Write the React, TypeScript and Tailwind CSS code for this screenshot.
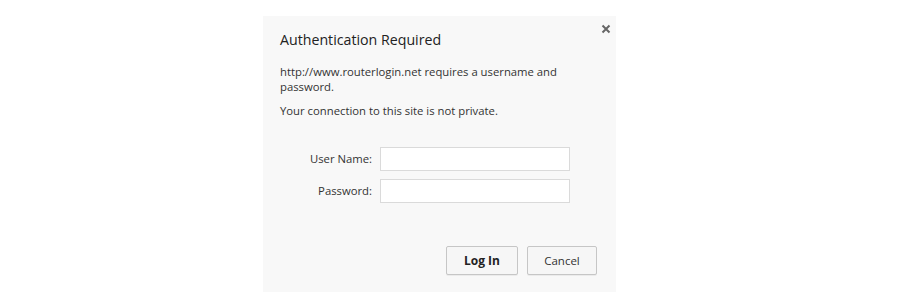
import React from 'react';

const App: React.FC = () => {
  return (
    <div className="w-[900px] h-[307px] bg-white flex justify-center pt-4 font-['Open_Sans',sans-serif] text-[#333]">
      <div className="w-[353px] h-[276px] bg-[#f8f8f8] flex flex-col pl-[17px] pr-[19px] ml-[-21px]">
        <div className="flex justify-between items-start pt-[14px]">
          <h1 className="text-[14.2px] leading-5 text-[#222]">Authentication Required</h1>
          <button className="mt-[-6px] mr-[-14px] text-[#666]" aria-label="Close">
            <svg width="10" height="10" viewBox="0 0 10 10">
              <path d="M1.5 1.5 L8.5 8.5 M8.5 1.5 L1.5 8.5" stroke="#666" strokeWidth="2" />
            </svg>
          </button>
        </div>
        <p className="mt-[14px] text-[11.3px] leading-[15px] pr-4">
          http://www.routerlogin.net requires a username and password.
        </p>
        <p className="mt-[9px] text-[11.3px] leading-[15px]">Your connection to this site is not private.</p>

        <div className="mt-[29px] flex flex-col gap-[8px] text-[11.3px]">
          <div className="flex items-center">
            <label className="w-[100px] pr-[8px] text-right whitespace-nowrap">User Name:</label>
            <input className="w-[190px] h-[24px] bg-white border border-[#dadada] outline-none" />
          </div>
          <div className="flex items-center">
            <label className="w-[100px] pr-[8px] text-right whitespace-nowrap">Password:</label>
            <input type="password" className="w-[190px] h-[24px] bg-white border border-[#dadada] outline-none" />
          </div>
        </div>

        <div className="mt-[43px] flex justify-end gap-[9px]">
          <button className="w-[72px] h-[29px] border border-[#c6c6c6] rounded-[2px] bg-[#f6f6f6] text-[12px] font-bold text-[#222] shadow-[0_1px_0_rgba(0,0,0,0.05)]">
            Log In
          </button>
          <button className="w-[70px] h-[29px] border border-[#c6c6c6] rounded-[2px] bg-[#f6f6f6] text-[11.5px] text-[#333] shadow-[0_1px_0_rgba(0,0,0,0.05)]">
            Cancel
          </button>
        </div>
      </div>
    </div>
  );
};

export default App;
